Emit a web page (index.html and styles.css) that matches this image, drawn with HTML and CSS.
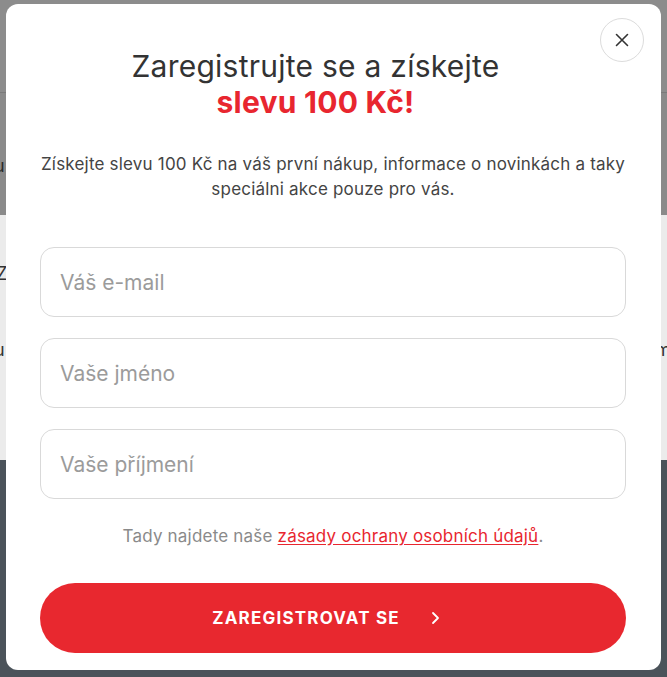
FILE: index.html
```html
<!DOCTYPE html>
<html lang="cs">
<head>
<meta charset="utf-8">
<title>Registrace</title>
<link rel="stylesheet" href="styles.css">
</head>
<body>
<div class="page">
  <div class="band band-top"></div>
  <div class="band band-mid"><span class="peek peek-u1">u</span></div>
  <div class="band band-light"><span class="peek peek-z">Z</span><span class="peek peek-u2">u</span><span class="peek peek-m">m</span></div>
  <div class="band band-dark"></div>
</div>
<div class="modal">
  <button class="close" aria-label="Zavřít">
    <svg width="14" height="14" viewBox="0 0 14 14"><path d="M1.5 1.5 L12.5 12.5 M12.5 1.5 L1.5 12.5" stroke="#333" stroke-width="1.6" fill="none" stroke-linecap="round"/></svg>
  </button>
  <h1 class="title">Zaregistrujte se a získejte<br><strong>slevu 100 Kč!</strong></h1>
  <p class="lead">Získejte slevu 100 Kč na váš první nákup, informace o novinkách a taky speciálni akce pouze pro vás.</p>
  <form class="form">
    <input class="field" type="email" placeholder="Váš e-mail">
    <input class="field" type="text" placeholder="Vaše jméno">
    <input class="field" type="text" placeholder="Vaše příjmení">
    <p class="privacy">Tady najdete naše <a href="#">zásady ochrany osobních údajů</a>.</p>
    <button class="submit" type="button">ZAREGISTROVAT SE
      <svg class="chev" width="9" height="14" viewBox="0 0 9 14"><path d="M2 2 L7 7 L2 12" stroke="#fff" stroke-width="1.8" fill="none" stroke-linecap="round" stroke-linejoin="round"/></svg>
    </button>
  </form>
</div>
</body>
</html>
```
FILE: styles.css
```css
* { box-sizing: border-box; }
html, body { margin: 0; padding: 0; }
body {
  width: 667px;
  height: 677px;
  overflow: hidden;
  font-family: Inter, "Noto Sans", sans-serif;
  position: relative;
  background: #4b535a;
}
.page { display: flex; flex-direction: column; height: 677px; }
.band { position: relative; }
.band-top { height: 93px; background: #8c8c8c; border-bottom: 1px solid #7a7a7a; }
.band-mid { height: 122px; background: #8a8a8a; }
.band-light { height: 245px; background: #ebebeb; }
.band-dark { flex: 1; background: #4b535a; }
.peek { position: absolute; font-size: 18px; color: #333; }
.peek-u1 { left: -6px; top: 62px; color: #2a2a2a; }
.peek-z { left: -4px; top: 48px; }
.peek-u2 { left: -6px; top: 124px; }
.peek-m { right: -4px; top: 124px; }

.modal {
  position: absolute;
  left: 6px;
  top: 4px;
  width: 655px;
  height: 666px;
  background: #fff;
  border-radius: 12px;
  padding: 0 35px 0 34px;
  display: flex;
  flex-direction: column;
  align-items: stretch;
}
.close {
  position: absolute;
  right: 17px;
  top: 14px;
  width: 44px;
  height: 44px;
  border-radius: 50%;
  border: 1px solid #dcdcdc;
  background: #fff;
  display: flex;
  align-items: center;
  justify-content: center;
  padding: 0;
}
.title {
  margin: 44px 0 0;
  padding-right: 35px;
  text-align: center;
  font-weight: 400;
  font-size: 30px;
  line-height: 36px;
  color: #333;
  letter-spacing: 0.25px;
}
.title strong { color: #e8262f; font-weight: 700; }
.lead {
  margin: 32px 0 0;
  text-align: center;
  font-size: 17px;
  line-height: 25px;
  letter-spacing: 0.2px;
  color: #444;
}
.form { display: flex; flex-direction: column; margin-top: 45px; }
.field {
  height: 70px;
  border: 1px solid #d9d9d9;
  border-radius: 14px;
  padding: 0 19px;
  font-family: Inter, "Noto Sans", sans-serif;
  font-size: 21px;
  color: #333;
  margin-bottom: 21px;
  outline: none;
}
.field::placeholder { color: #9b9b9b; }
.privacy {
  margin: 4px 0 0;
  text-align: center;
  font-size: 17px;
  line-height: 24px;
  letter-spacing: 0.2px;
  color: #8a8a8a;
}
.privacy a { color: #e8262f; text-decoration: underline; text-underline-offset: 2px; }
.submit {
  margin-top: 35px;
  height: 70px;
  border: none;
  border-radius: 35px;
  background: #e8282f;
  color: #fff;
  font-family: Inter, "Noto Sans", sans-serif;
  font-weight: 700;
  font-size: 17px;
  letter-spacing: 1.2px;
  display: flex;
  align-items: center;
  justify-content: center;
  gap: 31px;
  padding: 0 14px 0 0;
}
.chev { display: block; }
```
